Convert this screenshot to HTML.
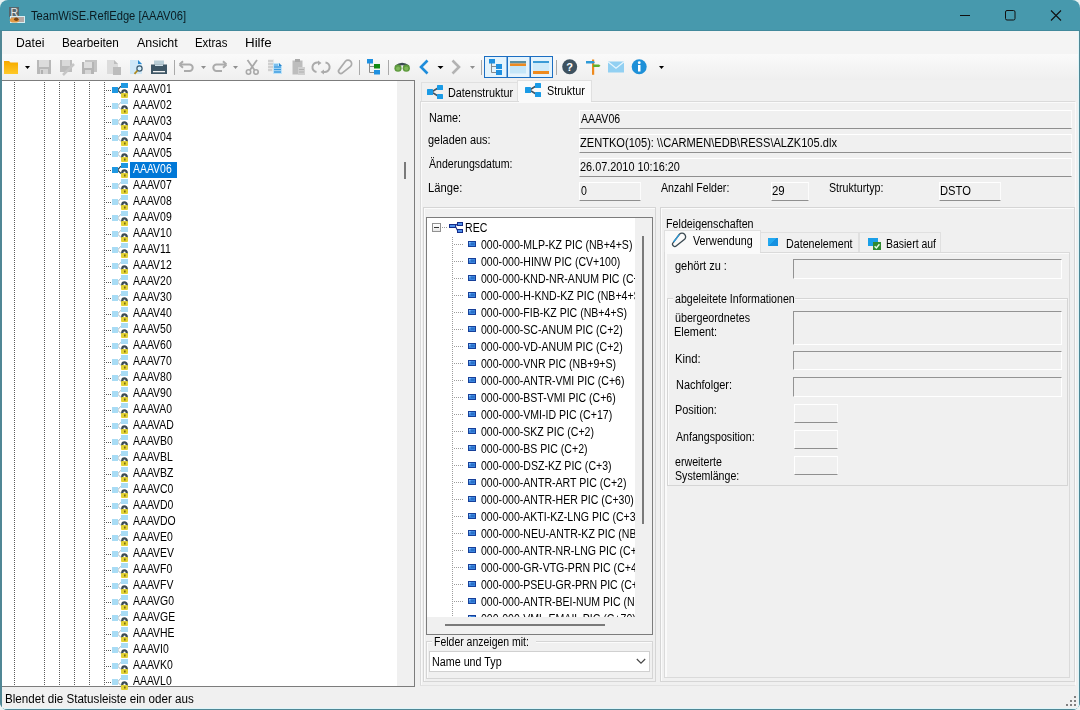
<!DOCTYPE html>
<html><head><meta charset="utf-8"><style>
*{margin:0;padding:0;box-sizing:border-box}
html,body{width:1080px;height:710px;overflow:hidden;background:#e8f2f2;font-family:"Liberation Sans", sans-serif}
.abs{position:absolute}
#win{position:absolute;left:0;top:0;width:1080px;height:710px;background:#f0f0f0;border-radius:8px;overflow:hidden}
.tx{position:absolute;font-size:12px;line-height:13px;color:#000;white-space:nowrap;transform-origin:0 0}
.dotv{position:absolute;width:1px;background:repeating-linear-gradient(to bottom,#5c5c5c 0 1px,transparent 1px 2px)}
.doth{position:absolute;height:1px;background:repeating-linear-gradient(to right,#5c5c5c 0 1px,transparent 1px 2px)}
.fld{position:absolute;background:#f0f0f0;border-top:1px solid #fff;border-left:1px solid #fff;border-bottom:1px solid #8f8f8f;border-right:1px solid #fcfcfc}
.sfld{position:absolute;background:#f0f0f0;border-top:1px solid #939393;border-left:1px solid #939393;border-bottom:1px solid #fff;border-right:1px solid #fff}
.gb{position:absolute;border:1px solid #d5d5d5;box-shadow:inset 1px 1px 0 #fbfbfb}
</style></head><body>
<div id="win">

<div class="abs" style="left:0;top:0;width:1080px;height:710px;background:#4799ad"></div>
<div class="abs" style="left:0;top:31px;width:1080px;height:679px;background:#508795"></div>
<div class="abs" style="left:2px;top:31px;width:1077px;height:678px;background:#dff6fa"></div>
<div class="abs" style="left:2px;top:31px;width:1076px;height:677px;background:#f0f0f0"></div>
<div class="abs" style="left:0;top:30px;width:1080px;height:1px;background:#42899c"></div>
<svg class="abs" style="left:8px;top:6px" width="18" height="18" viewBox="0 0 18 18">
<rect x="1" y="1" width="10" height="10" fill="#56676e"/>
<text x="2.6" y="9.6" font-family="Liberation Sans" font-size="10.5" fill="#e6e6e6">R</text>
<rect x="2.5" y="10.5" width="14" height="6" fill="#b4a9a6" stroke="#d8eef2" stroke-width="1"/>
<ellipse cx="6.5" cy="14" rx="4.8" ry="2.6" fill="#e39a45"/>
<ellipse cx="8.3" cy="13.3" rx="2.2" ry="1.7" fill="#7a4514"/>
</svg>
<div class="tx" style="left:30.55px;top:10px;transform:scaleX(0.931);color:#0a1a20">TeamWiSE.ReflEdge [AAAV06]</div>
<svg class="abs" style="left:950px;top:0" width="130" height="30" viewBox="950 0 130 30">
<rect x="960" y="15" width="10" height="1" fill="#111"/>
<rect x="1005.5" y="10.5" width="9.5" height="9.5" rx="1.5" fill="none" stroke="#111" stroke-width="1"/>
<path d="M1051 10.5 L1061 20.5 M1061 10.5 L1051 20.5" stroke="#111" stroke-width="1.1"/>
</svg>
<div class="abs" style="left:2px;top:31px;width:1076px;height:23px;background:#f4f4f4"></div>
<div class="tx" style="left:15.61px;top:37px;transform:scaleX(1.011)">Datei</div>
<div class="tx" style="left:61.64px;top:37px;transform:scaleX(0.979)">Bearbeiten</div>
<div class="tx" style="left:136.68px;top:37px;transform:scaleX(1.035)">Ansicht</div>
<div class="tx" style="left:195.06px;top:37px;transform:scaleX(0.951)">Extras</div>
<div class="tx" style="left:245.31px;top:37px;transform:scaleX(1.112)">Hilfe</div>
<div class="abs" style="left:2px;top:54px;width:1076px;height:26px;background:linear-gradient(#fafafa,#efefef)"></div>
<svg class="abs" style="left:0;top:54px" width="680" height="26" viewBox="0 54 680 26">
<defs>
<linearGradient id="gfold" x1="0" y1="0" x2="0" y2="1"><stop offset="0" stop-color="#f5a800"/><stop offset="1" stop-color="#ffc928"/></linearGradient>
<linearGradient id="ggray" x1="0" y1="0" x2="0" y2="1"><stop offset="0" stop-color="#c9c9c9"/><stop offset="1" stop-color="#b3b3b3"/></linearGradient>
</defs>
<!-- folder -->
<path d="M4 61 h5 l1.5 1.5 H18 V74 H4 Z" fill="url(#gfold)"/>
<rect x="4" y="64" width="14" height="1" fill="#f9b400"/>
<path d="M25 66 h5 l-2.5 3 z" fill="#000"/>
<!-- save gray -->
<rect x="37" y="60" width="14" height="14" fill="#b8b8b8"/>
<rect x="39" y="60" width="10" height="7" fill="#dcdcdc"/>
<rect x="40" y="69" width="8" height="5" fill="#d5d5d5"/>
<rect x="41" y="70" width="2" height="4" fill="#b0b0b0"/>
<!-- save as gray -->
<rect x="60" y="60" width="12" height="12" fill="#bdbdbd"/>
<rect x="62" y="60" width="8" height="6" fill="#dadada"/>
<path d="M63 75 L74 64" stroke="#c6c6c6" stroke-width="2.5"/>
<!-- save all gray -->
<rect x="85" y="60" width="12" height="12" fill="#c4c4c4"/>
<rect x="82" y="62" width="12" height="12" fill="#b5b5b5"/>
<rect x="84" y="62" width="8" height="6" fill="#dedede"/>
<rect x="85" y="70" width="6" height="4" fill="#d6d6d6"/>
<!-- doc gray -->
<path d="M107 60 h7 l4 4 v10 h-11 z" fill="#dcdcdc"/>
<path d="M114 60 l4 4 h-4 z" fill="#bdbdbd"/>
<rect x="113" y="67" width="8" height="8" fill="#bcbcbc"/>
<!-- print preview -->
<path d="M130 60 h8 l4 4 v10 h-12 z" fill="#cfe8f8"/>
<path d="M138 60 l4 4 h-4 z" fill="#2a8ad0"/>
<circle cx="139.5" cy="68.5" r="2.6" fill="#d9f0fb" stroke="#3a5a70" stroke-width="1.2"/>
<path d="M137.5 70.5 L134.5 73.8" stroke="#b08a20" stroke-width="1.8"/>
<!-- printer -->
<rect x="154" y="60.5" width="10" height="4" fill="#b9cdd6"/>
<path d="M151 64.5 h16 v9.5 h-16 z" fill="#3e5665"/>
<rect x="153" y="71" width="12" height="1.3" fill="#f2f2f2"/>
<rect x="155" y="64.5" width="8" height="1.5" fill="#cfe0e8"/>
<!-- sep -->
<rect x="174" y="60" width="1" height="15" fill="#a9a9a9"/>
<!-- undo -->
<path d="M181 64.5 H189.5 a3.2 3.2 0 0 1 0 6.4 H184" fill="none" stroke="#ababab" stroke-width="2"/>
<path d="M179.5 64.5 L183 61.2 M179.5 64.5 L183 67.8" stroke="#ababab" stroke-width="2" fill="none"/>
<path d="M201 66 h5 l-2.5 3 z" fill="#8f8f8f"/>
<!-- redo -->
<path d="M225 64.5 H216.5 a3.2 3.2 0 0 0 0 6.4 H222" fill="none" stroke="#ababab" stroke-width="2"/>
<path d="M226.5 64.5 L223 61.2 M226.5 64.5 L223 67.8" stroke="#ababab" stroke-width="2" fill="none"/>
<path d="M233 66 h5 l-2.5 3 z" fill="#8f8f8f"/>
<!-- scissors -->
<path d="M247.5 60 L254.5 70 M257 60 L250 70" stroke="#a9a9a9" stroke-width="1.8"/>
<circle cx="248.5" cy="72" r="2.2" fill="none" stroke="#a9a9a9" stroke-width="1.6"/>
<circle cx="256" cy="72" r="2.2" fill="none" stroke="#a9a9a9" stroke-width="1.6"/>
<!-- copy -->
<rect x="268" y="59.5" width="6" height="12" fill="#e6e6e6"/>
<path d="M268 61 h5 M268 64 h5 M268 67 h5 M268 70 h4" stroke="#b9b9b9" stroke-width="1"/>
<path d="M273 63 h6 l3 3 v8 h-9 z" fill="#bfe3f8"/>
<path d="M279 63 l3 3 h-3 z" fill="#2a86cc"/>
<path d="M274 67 h7 M274 69.5 h7 M274 72 h7" stroke="#3b9be0" stroke-width="1.3"/>
<path d="M274 65 h4" stroke="#3b9be0" stroke-width="1"/>
<!-- paste gray -->
<rect x="292.5" y="60.5" width="10" height="14" fill="#bdbdbd"/>
<rect x="295" y="59" width="5" height="3" fill="#a9a9a9"/>
<rect x="298" y="67" width="7" height="8" fill="#cfcfcf"/>
<path d="M299 69.5 h5 M299 72 h5" stroke="#b0b0b0" stroke-width="1"/>
<!-- cycle -->
<path d="M318 62.5 a4.8 4.8 0 0 0 -1.5 9.5 M324 72 a4.8 4.8 0 0 0 1.5 -9.5" fill="none" stroke="#ababab" stroke-width="2"/>
<path d="M318 60.5 L321.5 63 L318 65.5 Z M324 69.5 L320.5 72 L324 74.5 Z" fill="#ababab"/>
<!-- paperclip gray -->
<g transform="translate(337,59)"><path d="M8.42 2.29 A3.6 3.6 0 1 1 13.58 7.31 L5.45 13.8 A2.3 2.3 0 0 1 2.15 10.6 Z" fill="none" stroke="#ababab" stroke-width="1.7"/></g>
<!-- sep -->
<rect x="359" y="60" width="1" height="15" fill="#a9a9a9"/>
<!-- tree green -->
<path d="M369.5 63 V72.5 H374 M369.5 66.5 H374" fill="none" stroke="#8a8a8a" stroke-width="1"/>
<rect x="367" y="59" width="6" height="4.5" fill="#1e90e0"/>
<rect x="374" y="64" width="6" height="4.5" fill="#138a13"/>
<rect x="374" y="70" width="6" height="4.5" fill="#1e90e0"/>
<!-- sep -->
<rect x="388" y="60" width="1" height="15" fill="#a9a9a9"/>
<!-- binoculars -->
<path d="M396 66.5 Q402 61.5 408.5 66.5" fill="none" stroke="#3a4a52" stroke-width="2.6"/>
<circle cx="398" cy="68.2" r="3.6" fill="#5e9a3e"/>
<circle cx="406.3" cy="68.2" r="3.6" fill="#5e9a3e"/>
<circle cx="398" cy="68.5" r="2" fill="#7fb85a"/>
<circle cx="406.3" cy="68.5" r="2" fill="#7fb85a"/>
<!-- back -->
<path d="M427.5 60.5 L421 67 L427.5 73.5" fill="none" stroke="#1f8ddb" stroke-width="2.6"/>
<path d="M437.5 66 h6 l-3 3 z" fill="#000"/>
<!-- forward gray -->
<path d="M452.5 60.5 L459 67 L452.5 73.5" fill="none" stroke="#b3b3b3" stroke-width="2.6"/>
<path d="M470 66 h5 l-2.5 3 z" fill="#8f8f8f"/>
<!-- sep -->
<rect x="481" y="60" width="1" height="15" fill="#a9a9a9"/>
<!-- checked group -->
<rect x="484.5" y="56.5" width="68" height="21" fill="#e4f3fc" stroke="#1b6ec2" stroke-width="1"/>
<rect x="506.5" y="56" width="1.5" height="22" fill="#1b6ec2"/>
<rect x="529.5" y="56" width="1.5" height="22" fill="#1b6ec2"/>
<path d="M491.5 63 V72.5 H496 M491.5 66.5 H496" fill="none" stroke="#8a8a8a" stroke-width="1"/>
<rect x="489" y="59" width="6" height="4.5" fill="#1e90e0"/>
<rect x="496" y="64" width="6" height="5" fill="#1e90e0"/>
<rect x="496" y="70" width="6" height="5" fill="#1e90e0"/>
<rect x="510" y="61" width="16" height="2.5" fill="#5b8fa0"/>
<rect x="510" y="63.5" width="16" height="2.5" fill="#ee8a1e"/>
<rect x="510" y="66" width="16" height="7.5" fill="#c5e6f8"/>
<rect x="533" y="61" width="16" height="2" fill="#3a9ad6"/>
<rect x="533" y="63" width="16" height="8" fill="#cfeaf9"/>
<rect x="533" y="71" width="16" height="3" fill="#ee8a1e"/>
<!-- sep -->
<rect x="556" y="60" width="1" height="15" fill="#a9a9a9"/>
<!-- help -->
<circle cx="569.7" cy="66.7" r="7.5" fill="#3e5260"/>
<text x="569.7" y="71" font-family="Liberation Sans" font-weight="bold" font-size="11" fill="#fff" text-anchor="middle">?</text>
<!-- signpost -->
<rect x="592" y="59.5" width="2.2" height="15.3" fill="#ee8a1e"/>
<path d="M586 61 h7.5 l1.5 1.3 l-1.5 1.3 h-7.5 z" fill="#2e9ad8"/>
<path d="M593 64.5 h6 l1.5 1.3 l-1.5 1.3 h-6 z" fill="#5fb030"/>
<!-- envelope -->
<rect x="608" y="61.5" width="16" height="11" fill="#92d0f2"/>
<path d="M608 61.8 L616 68.3 L624 61.8" fill="none" stroke="#e8f6fd" stroke-width="1.2"/>
<!-- info -->
<circle cx="639.2" cy="66.7" r="7.5" fill="#1e90d8"/>
<rect x="638" y="65" width="2.5" height="6.5" fill="#fff"/>
<circle cx="639.25" cy="62.7" r="1.4" fill="#fff"/>
<path d="M659 66 h5 l-2.5 3 z" fill="#000"/>
</svg>

<div class="abs" style="left:2px;top:80px;width:413px;height:607px;background:#fff;border-top:1px solid #7c7c7c;border-right:1px solid #7c7c7c;border-bottom:1px solid #7c7c7c"></div>
<div class="abs" style="left:397px;top:81px;width:17px;height:605px;background:#f0f0f0"></div>
<div class="abs" style="left:404px;top:162px;width:2px;height:17px;background:#7a7a7a"></div>
<div class="dotv" style="left:14px;top:82px;height:604px"></div>
<div class="dotv" style="left:44px;top:82px;height:604px"></div>
<div class="dotv" style="left:59px;top:82px;height:604px"></div>
<div class="dotv" style="left:74px;top:82px;height:604px"></div>
<div class="dotv" style="left:89px;top:82px;height:604px"></div>
<div class="dotv" style="left:104px;top:82px;height:604px"></div>
<svg width="0" height="0" style="position:absolute"><defs>
<symbol id="ti" viewBox="0 0 17 16">
<path d="M5.5 8 L9 4.2 M5.5 8 L9 11.5" stroke="#a3b3bb" stroke-width="1" fill="none"/>
<rect x="0" y="5" width="6" height="6" fill="#a8dcf5"/>
<rect x="9" y="1" width="7" height="5" fill="#a8dcf5"/>
<path d="M10.3 12 V10.6 a2.2 2.2 0 0 1 4.4 0 V12" stroke="#3a4a52" stroke-width="2.3" fill="none"/>
<rect x="9" y="11" width="7" height="5" rx="1" fill="#e2d236"/>
<rect x="12" y="12.5" width="1.6" height="2" fill="#7a6a10"/>
</symbol>
<symbol id="tid" viewBox="0 0 17 16">
<path d="M5.5 8 L9 4.2 M5.5 8 L9 11.5" stroke="#2f4550" stroke-width="1.2" fill="none"/>
<rect x="0" y="5" width="6" height="6" fill="#1e98e2"/>
<rect x="9" y="1" width="7" height="5" fill="#1e98e2"/>
<path d="M10.3 12 V10.6 a2.2 2.2 0 0 1 4.4 0 V12" stroke="#3a4a52" stroke-width="2.3" fill="none"/>
<rect x="9" y="11" width="7" height="5" rx="1" fill="#e2d236"/>
<rect x="12" y="12.5" width="1.6" height="2" fill="#7a6a10"/>
</symbol>
<symbol id="fi" viewBox="0 0 8 6"><rect x="0" y="0" width="8" height="6" fill="#173f98"/><rect x="1" y="1" width="6" height="4" fill="#3b86e0"/><path d="M1 1 h2 l-2 2 z" fill="#8cc4f8"/><rect x="3" y="2" width="3.5" height="2" fill="#2a70c8"/></symbol>
</defs></svg>
<div class="doth" style="left:104px;top:90px;width:8px"></div>
<svg class="abs" style="left:112px;top:82px" width="17" height="16"><use href="#tid"/></svg>
<div class="tx" style="left:133.28px;top:83px;transform:scaleX(0.870)">AAAV01</div>
<div class="doth" style="left:104px;top:106px;width:8px"></div>
<svg class="abs" style="left:112px;top:98px" width="17" height="16"><use href="#ti"/></svg>
<div class="tx" style="left:133.28px;top:99px;transform:scaleX(0.870)">AAAV02</div>
<div class="doth" style="left:104px;top:122px;width:8px"></div>
<svg class="abs" style="left:112px;top:114px" width="17" height="16"><use href="#ti"/></svg>
<div class="tx" style="left:133.28px;top:115px;transform:scaleX(0.870)">AAAV03</div>
<div class="doth" style="left:104px;top:138px;width:8px"></div>
<svg class="abs" style="left:112px;top:130px" width="17" height="16"><use href="#ti"/></svg>
<div class="tx" style="left:133.28px;top:131px;transform:scaleX(0.870)">AAAV04</div>
<div class="doth" style="left:104px;top:154px;width:8px"></div>
<svg class="abs" style="left:112px;top:146px" width="17" height="16"><use href="#ti"/></svg>
<div class="tx" style="left:133.28px;top:147px;transform:scaleX(0.870)">AAAV05</div>
<div class="doth" style="left:104px;top:170px;width:8px"></div>
<svg class="abs" style="left:112px;top:162px" width="17" height="16"><use href="#tid"/></svg>
<div class="abs" style="left:130px;top:162px;width:47px;height:16px;background:#0078d7"></div>
<div class="tx" style="left:133.28px;top:163px;transform:scaleX(0.870);color:#fff">AAAV06</div>
<div class="doth" style="left:104px;top:186px;width:8px"></div>
<svg class="abs" style="left:112px;top:178px" width="17" height="16"><use href="#ti"/></svg>
<div class="tx" style="left:133.28px;top:179px;transform:scaleX(0.870)">AAAV07</div>
<div class="doth" style="left:104px;top:202px;width:8px"></div>
<svg class="abs" style="left:112px;top:194px" width="17" height="16"><use href="#ti"/></svg>
<div class="tx" style="left:133.28px;top:195px;transform:scaleX(0.870)">AAAV08</div>
<div class="doth" style="left:104px;top:218px;width:8px"></div>
<svg class="abs" style="left:112px;top:210px" width="17" height="16"><use href="#ti"/></svg>
<div class="tx" style="left:133.28px;top:211px;transform:scaleX(0.870)">AAAV09</div>
<div class="doth" style="left:104px;top:234px;width:8px"></div>
<svg class="abs" style="left:112px;top:226px" width="17" height="16"><use href="#ti"/></svg>
<div class="tx" style="left:133.28px;top:227px;transform:scaleX(0.870)">AAAV10</div>
<div class="doth" style="left:104px;top:250px;width:8px"></div>
<svg class="abs" style="left:112px;top:242px" width="17" height="16"><use href="#ti"/></svg>
<div class="tx" style="left:133.28px;top:243px;transform:scaleX(0.870)">AAAV11</div>
<div class="doth" style="left:104px;top:266px;width:8px"></div>
<svg class="abs" style="left:112px;top:258px" width="17" height="16"><use href="#ti"/></svg>
<div class="tx" style="left:133.28px;top:259px;transform:scaleX(0.870)">AAAV12</div>
<div class="doth" style="left:104px;top:282px;width:8px"></div>
<svg class="abs" style="left:112px;top:274px" width="17" height="16"><use href="#ti"/></svg>
<div class="tx" style="left:133.28px;top:275px;transform:scaleX(0.870)">AAAV20</div>
<div class="doth" style="left:104px;top:298px;width:8px"></div>
<svg class="abs" style="left:112px;top:290px" width="17" height="16"><use href="#ti"/></svg>
<div class="tx" style="left:133.28px;top:291px;transform:scaleX(0.870)">AAAV30</div>
<div class="doth" style="left:104px;top:314px;width:8px"></div>
<svg class="abs" style="left:112px;top:306px" width="17" height="16"><use href="#ti"/></svg>
<div class="tx" style="left:133.28px;top:307px;transform:scaleX(0.870)">AAAV40</div>
<div class="doth" style="left:104px;top:330px;width:8px"></div>
<svg class="abs" style="left:112px;top:322px" width="17" height="16"><use href="#ti"/></svg>
<div class="tx" style="left:133.28px;top:323px;transform:scaleX(0.870)">AAAV50</div>
<div class="doth" style="left:104px;top:346px;width:8px"></div>
<svg class="abs" style="left:112px;top:338px" width="17" height="16"><use href="#ti"/></svg>
<div class="tx" style="left:133.28px;top:339px;transform:scaleX(0.870)">AAAV60</div>
<div class="doth" style="left:104px;top:362px;width:8px"></div>
<svg class="abs" style="left:112px;top:354px" width="17" height="16"><use href="#ti"/></svg>
<div class="tx" style="left:133.28px;top:355px;transform:scaleX(0.870)">AAAV70</div>
<div class="doth" style="left:104px;top:378px;width:8px"></div>
<svg class="abs" style="left:112px;top:370px" width="17" height="16"><use href="#ti"/></svg>
<div class="tx" style="left:133.28px;top:371px;transform:scaleX(0.870)">AAAV80</div>
<div class="doth" style="left:104px;top:394px;width:8px"></div>
<svg class="abs" style="left:112px;top:386px" width="17" height="16"><use href="#ti"/></svg>
<div class="tx" style="left:133.28px;top:387px;transform:scaleX(0.870)">AAAV90</div>
<div class="doth" style="left:104px;top:410px;width:8px"></div>
<svg class="abs" style="left:112px;top:402px" width="17" height="16"><use href="#ti"/></svg>
<div class="tx" style="left:133.28px;top:403px;transform:scaleX(0.870)">AAAVA0</div>
<div class="doth" style="left:104px;top:426px;width:8px"></div>
<svg class="abs" style="left:112px;top:418px" width="17" height="16"><use href="#ti"/></svg>
<div class="tx" style="left:133.28px;top:419px;transform:scaleX(0.870)">AAAVAD</div>
<div class="doth" style="left:104px;top:442px;width:8px"></div>
<svg class="abs" style="left:112px;top:434px" width="17" height="16"><use href="#ti"/></svg>
<div class="tx" style="left:133.28px;top:435px;transform:scaleX(0.870)">AAAVB0</div>
<div class="doth" style="left:104px;top:458px;width:8px"></div>
<svg class="abs" style="left:112px;top:450px" width="17" height="16"><use href="#ti"/></svg>
<div class="tx" style="left:133.28px;top:451px;transform:scaleX(0.870)">AAAVBL</div>
<div class="doth" style="left:104px;top:474px;width:8px"></div>
<svg class="abs" style="left:112px;top:466px" width="17" height="16"><use href="#ti"/></svg>
<div class="tx" style="left:133.28px;top:467px;transform:scaleX(0.870)">AAAVBZ</div>
<div class="doth" style="left:104px;top:490px;width:8px"></div>
<svg class="abs" style="left:112px;top:482px" width="17" height="16"><use href="#ti"/></svg>
<div class="tx" style="left:133.28px;top:483px;transform:scaleX(0.870)">AAAVC0</div>
<div class="doth" style="left:104px;top:506px;width:8px"></div>
<svg class="abs" style="left:112px;top:498px" width="17" height="16"><use href="#ti"/></svg>
<div class="tx" style="left:133.28px;top:499px;transform:scaleX(0.870)">AAAVD0</div>
<div class="doth" style="left:104px;top:522px;width:8px"></div>
<svg class="abs" style="left:112px;top:514px" width="17" height="16"><use href="#ti"/></svg>
<div class="tx" style="left:133.28px;top:515px;transform:scaleX(0.870)">AAAVDO</div>
<div class="doth" style="left:104px;top:538px;width:8px"></div>
<svg class="abs" style="left:112px;top:530px" width="17" height="16"><use href="#ti"/></svg>
<div class="tx" style="left:133.28px;top:531px;transform:scaleX(0.870)">AAAVE0</div>
<div class="doth" style="left:104px;top:554px;width:8px"></div>
<svg class="abs" style="left:112px;top:546px" width="17" height="16"><use href="#ti"/></svg>
<div class="tx" style="left:133.28px;top:547px;transform:scaleX(0.870)">AAAVEV</div>
<div class="doth" style="left:104px;top:570px;width:8px"></div>
<svg class="abs" style="left:112px;top:562px" width="17" height="16"><use href="#ti"/></svg>
<div class="tx" style="left:133.28px;top:563px;transform:scaleX(0.870)">AAAVF0</div>
<div class="doth" style="left:104px;top:586px;width:8px"></div>
<svg class="abs" style="left:112px;top:578px" width="17" height="16"><use href="#ti"/></svg>
<div class="tx" style="left:133.28px;top:579px;transform:scaleX(0.870)">AAAVFV</div>
<div class="doth" style="left:104px;top:602px;width:8px"></div>
<svg class="abs" style="left:112px;top:594px" width="17" height="16"><use href="#ti"/></svg>
<div class="tx" style="left:133.28px;top:595px;transform:scaleX(0.870)">AAAVG0</div>
<div class="doth" style="left:104px;top:618px;width:8px"></div>
<svg class="abs" style="left:112px;top:610px" width="17" height="16"><use href="#ti"/></svg>
<div class="tx" style="left:133.28px;top:611px;transform:scaleX(0.870)">AAAVGE</div>
<div class="doth" style="left:104px;top:634px;width:8px"></div>
<svg class="abs" style="left:112px;top:626px" width="17" height="16"><use href="#ti"/></svg>
<div class="tx" style="left:133.28px;top:627px;transform:scaleX(0.870)">AAAVHE</div>
<div class="doth" style="left:104px;top:650px;width:8px"></div>
<svg class="abs" style="left:112px;top:642px" width="17" height="16"><use href="#ti"/></svg>
<div class="tx" style="left:133.28px;top:643px;transform:scaleX(0.870)">AAAVI0</div>
<div class="doth" style="left:104px;top:666px;width:8px"></div>
<svg class="abs" style="left:112px;top:658px" width="17" height="16"><use href="#ti"/></svg>
<div class="tx" style="left:133.28px;top:659px;transform:scaleX(0.870)">AAAVK0</div>
<div class="doth" style="left:104px;top:682px;width:8px"></div>
<svg class="abs" style="left:112px;top:674px" width="17" height="16"><use href="#ti"/></svg>
<div class="tx" style="left:133.28px;top:675px;transform:scaleX(0.870)">AAAVL0</div>
<div class="abs" style="left:421px;top:82px;width:97px;height:20px;background:#f0f0f0;border:1px solid #e0e0e0;border-bottom:none"></div>
<div class="abs" style="left:517px;top:80px;width:75px;height:22px;background:#fafafa;border:1px solid #e0e0e0;border-bottom:none"></div>
<svg width="0" height="0" style="position:absolute"><defs>
<symbol id="share" viewBox="0 0 16 16">
<path d="M4.5 8 L11 4 M4.5 8 L11 12" stroke="#3f5566" stroke-width="1.5"/>
<rect x="0" y="5" width="6" height="6" rx="0.6" fill="#1a9be6"/>
<rect x="10" y="1" width="6" height="5" rx="0.5" fill="#1a9be6"/>
<rect x="10" y="10" width="6" height="5" rx="0.5" fill="#1a9be6"/>
</symbol></defs></svg>
<svg class="abs" style="left:427px;top:84px" width="16" height="16"><use href="#share"/></svg>
<div class="tx" style="left:448.21px;top:87px;transform:scaleX(0.903)">Datenstruktur</div>
<svg class="abs" style="left:525px;top:82px" width="16" height="16"><use href="#share"/></svg>
<div class="tx" style="left:546.71px;top:85px;transform:scaleX(0.899)">Struktur</div>
<div class="abs" style="left:420px;top:101px;width:656px;height:585px;background:#f0f0f0;border:1px solid #dadada;border-right-color:#fbfbfb;border-bottom-color:#e2e2e2;box-shadow:inset 1px 1px 0 #fafafa"></div>
<div class="abs" style="left:519px;top:100px;width:72px;height:3px;background:#fafafa"></div>
<div class="tx" style="left:428.61px;top:112px;transform:scaleX(0.905)">Name:</div>
<div class="tx" style="left:428.14px;top:134px;transform:scaleX(0.910)">geladen aus:</div>
<div class="tx" style="left:428.88px;top:158px;transform:scaleX(0.881)">Änderungsdatum:</div>
<div class="tx" style="left:428.48px;top:182px;transform:scaleX(0.933)">Länge:</div>
<div class="tx" style="left:660.88px;top:182px;transform:scaleX(0.883)">Anzahl Felder:</div>
<div class="tx" style="left:828.62px;top:182px;transform:scaleX(0.886)">Strukturtyp:</div>
<div class="fld" style="left:579px;top:110px;width:493px;height:19px"></div>
<div class="tx" style="left:580.68px;top:113px;transform:scaleX(0.880)">AAAV06</div>
<div class="fld" style="left:579px;top:134px;width:493px;height:19px"></div>
<div class="tx" style="left:580.35px;top:137px;transform:scaleX(0.924)">ZENTKO(105): \\CARMEN\EDB\RESS\ALZK105.dlx</div>
<div class="fld" style="left:579px;top:158px;width:493px;height:19px"></div>
<div class="tx" style="left:580.25px;top:161px;transform:scaleX(0.907)">26.07.2010 10:16:20</div>
<div class="fld" style="left:579px;top:182px;width:62px;height:19px"></div>
<div class="tx" style="left:580.79px;top:185px;transform:scaleX(0.880)">0</div>
<div class="fld" style="left:771px;top:182px;width:38px;height:19px"></div>
<div class="tx" style="left:772.13px;top:185px;transform:scaleX(0.953)">29</div>
<div class="fld" style="left:939px;top:182px;width:62px;height:19px"></div>
<div class="tx" style="left:940.28px;top:185px;transform:scaleX(0.932)">DSTO</div>
<div class="gb" style="left:423px;top:207px;width:233px;height:475px"></div>
<div class="abs" style="left:426px;top:217px;width:227px;height:418px;background:#fff;border:1px solid #7c7c7c"></div>
<div class="abs" style="left:635px;top:218px;width:17px;height:416px;background:#f0f0f0"></div>
<div class="abs" style="left:427px;top:617px;width:208px;height:17px;background:#f0f0f0"></div>
<div class="abs" style="left:642px;top:236px;width:2px;height:288px;background:#7a7a7a"></div>
<div class="abs" style="left:445px;top:624px;width:160px;height:2px;background:#7a7a7a"></div>
<div class="abs" style="left:432px;top:223px;width:9px;height:9px;border:1px solid #919191;background:linear-gradient(#fff,#e8e8e8)"></div>
<div class="abs" style="left:434px;top:227px;width:5px;height:1px;background:#333"></div>
<div class="doth" style="left:442px;top:227px;width:6px;filter:opacity(0.6)"></div>
<svg class="abs" style="left:449px;top:222px" width="15" height="12" viewBox="0 0 15 12">
<path d="M6.5 3.5 L8.5 2 M6.5 4.5 L8.5 8.5" stroke="#142c8a" stroke-width="1.1" fill="none"/>
<rect x="0" y="2" width="7" height="4" fill="#142c8a"/><rect x="1" y="3" width="5" height="2" fill="#4f8fea"/>
<rect x="8" y="0" width="6" height="4" fill="#142c8a"/><rect x="9" y="1" width="4" height="2" fill="#4f8fea"/>
<rect x="8" y="7" width="6" height="4" fill="#142c8a"/><rect x="9" y="8" width="4" height="2" fill="#4f8fea"/>
</svg>
<div class="tx" style="left:464.83px;top:222px;transform:scaleX(0.880)">REC</div>
<div style="position:absolute;left:427px;top:235px;width:208px;height:382px;overflow:hidden">
<div class="dotv" style="left:25px;top:2px;height:380px;filter:opacity(0.6)"></div>
<div class="doth" style="left:27px;top:9px;width:9px;filter:opacity(0.6)"></div>
<svg class="abs" style="left:41px;top:6px" width="8" height="6"><use href="#fi"/></svg>
<div class="tx" style="left:54.49px;top:4px;transform:scaleX(0.880)">000-000-MLP-KZ PIC (NB+4+S)</div>
<div class="doth" style="left:27px;top:26px;width:9px;filter:opacity(0.6)"></div>
<svg class="abs" style="left:41px;top:23px" width="8" height="6"><use href="#fi"/></svg>
<div class="tx" style="left:54.49px;top:21px;transform:scaleX(0.880)">000-000-HINW PIC (CV+100)</div>
<div class="doth" style="left:27px;top:43px;width:9px;filter:opacity(0.6)"></div>
<svg class="abs" style="left:41px;top:40px" width="8" height="6"><use href="#fi"/></svg>
<div class="tx" style="left:54.49px;top:38px;transform:scaleX(0.880)">000-000-KND-NR-ANUM PIC (C+40)</div>
<div class="doth" style="left:27px;top:60px;width:9px;filter:opacity(0.6)"></div>
<svg class="abs" style="left:41px;top:57px" width="8" height="6"><use href="#fi"/></svg>
<div class="tx" style="left:54.49px;top:55px;transform:scaleX(0.880)">000-000-H-KND-KZ PIC (NB+4+S)</div>
<div class="doth" style="left:27px;top:77px;width:9px;filter:opacity(0.6)"></div>
<svg class="abs" style="left:41px;top:74px" width="8" height="6"><use href="#fi"/></svg>
<div class="tx" style="left:54.49px;top:72px;transform:scaleX(0.880)">000-000-FIB-KZ PIC (NB+4+S)</div>
<div class="doth" style="left:27px;top:94px;width:9px;filter:opacity(0.6)"></div>
<svg class="abs" style="left:41px;top:91px" width="8" height="6"><use href="#fi"/></svg>
<div class="tx" style="left:54.49px;top:89px;transform:scaleX(0.880)">000-000-SC-ANUM PIC (C+2)</div>
<div class="doth" style="left:27px;top:111px;width:9px;filter:opacity(0.6)"></div>
<svg class="abs" style="left:41px;top:108px" width="8" height="6"><use href="#fi"/></svg>
<div class="tx" style="left:54.49px;top:106px;transform:scaleX(0.880)">000-000-VD-ANUM PIC (C+2)</div>
<div class="doth" style="left:27px;top:128px;width:9px;filter:opacity(0.6)"></div>
<svg class="abs" style="left:41px;top:125px" width="8" height="6"><use href="#fi"/></svg>
<div class="tx" style="left:54.49px;top:123px;transform:scaleX(0.880)">000-000-VNR PIC (NB+9+S)</div>
<div class="doth" style="left:27px;top:145px;width:9px;filter:opacity(0.6)"></div>
<svg class="abs" style="left:41px;top:142px" width="8" height="6"><use href="#fi"/></svg>
<div class="tx" style="left:54.49px;top:140px;transform:scaleX(0.880)">000-000-ANTR-VMI PIC (C+6)</div>
<div class="doth" style="left:27px;top:162px;width:9px;filter:opacity(0.6)"></div>
<svg class="abs" style="left:41px;top:159px" width="8" height="6"><use href="#fi"/></svg>
<div class="tx" style="left:54.49px;top:157px;transform:scaleX(0.880)">000-000-BST-VMI PIC (C+6)</div>
<div class="doth" style="left:27px;top:179px;width:9px;filter:opacity(0.6)"></div>
<svg class="abs" style="left:41px;top:176px" width="8" height="6"><use href="#fi"/></svg>
<div class="tx" style="left:54.49px;top:174px;transform:scaleX(0.880)">000-000-VMI-ID PIC (C+17)</div>
<div class="doth" style="left:27px;top:196px;width:9px;filter:opacity(0.6)"></div>
<svg class="abs" style="left:41px;top:193px" width="8" height="6"><use href="#fi"/></svg>
<div class="tx" style="left:54.49px;top:191px;transform:scaleX(0.880)">000-000-SKZ PIC (C+2)</div>
<div class="doth" style="left:27px;top:213px;width:9px;filter:opacity(0.6)"></div>
<svg class="abs" style="left:41px;top:210px" width="8" height="6"><use href="#fi"/></svg>
<div class="tx" style="left:54.49px;top:208px;transform:scaleX(0.880)">000-000-BS PIC (C+2)</div>
<div class="doth" style="left:27px;top:230px;width:9px;filter:opacity(0.6)"></div>
<svg class="abs" style="left:41px;top:227px" width="8" height="6"><use href="#fi"/></svg>
<div class="tx" style="left:54.49px;top:225px;transform:scaleX(0.880)">000-000-DSZ-KZ PIC (C+3)</div>
<div class="doth" style="left:27px;top:247px;width:9px;filter:opacity(0.6)"></div>
<svg class="abs" style="left:41px;top:244px" width="8" height="6"><use href="#fi"/></svg>
<div class="tx" style="left:54.49px;top:242px;transform:scaleX(0.880)">000-000-ANTR-ART PIC (C+2)</div>
<div class="doth" style="left:27px;top:264px;width:9px;filter:opacity(0.6)"></div>
<svg class="abs" style="left:41px;top:261px" width="8" height="6"><use href="#fi"/></svg>
<div class="tx" style="left:54.49px;top:259px;transform:scaleX(0.880)">000-000-ANTR-HER PIC (C+30)</div>
<div class="doth" style="left:27px;top:281px;width:9px;filter:opacity(0.6)"></div>
<svg class="abs" style="left:41px;top:278px" width="8" height="6"><use href="#fi"/></svg>
<div class="tx" style="left:54.49px;top:276px;transform:scaleX(0.880)">000-000-AKTI-KZ-LNG PIC (C+3)</div>
<div class="doth" style="left:27px;top:298px;width:9px;filter:opacity(0.6)"></div>
<svg class="abs" style="left:41px;top:295px" width="8" height="6"><use href="#fi"/></svg>
<div class="tx" style="left:54.49px;top:293px;transform:scaleX(0.880)">000-000-NEU-ANTR-KZ PIC (NB+4+S)</div>
<div class="doth" style="left:27px;top:315px;width:9px;filter:opacity(0.6)"></div>
<svg class="abs" style="left:41px;top:312px" width="8" height="6"><use href="#fi"/></svg>
<div class="tx" style="left:54.49px;top:310px;transform:scaleX(0.880)">000-000-ANTR-NR-LNG PIC (C+4)</div>
<div class="doth" style="left:27px;top:332px;width:9px;filter:opacity(0.6)"></div>
<svg class="abs" style="left:41px;top:329px" width="8" height="6"><use href="#fi"/></svg>
<div class="tx" style="left:54.49px;top:327px;transform:scaleX(0.880)">000-000-GR-VTG-PRN PIC (C+40)</div>
<div class="doth" style="left:27px;top:349px;width:9px;filter:opacity(0.6)"></div>
<svg class="abs" style="left:41px;top:346px" width="8" height="6"><use href="#fi"/></svg>
<div class="tx" style="left:54.49px;top:344px;transform:scaleX(0.880)">000-000-PSEU-GR-PRN PIC (C+40)</div>
<div class="doth" style="left:27px;top:366px;width:9px;filter:opacity(0.6)"></div>
<svg class="abs" style="left:41px;top:363px" width="8" height="6"><use href="#fi"/></svg>
<div class="tx" style="left:54.49px;top:361px;transform:scaleX(0.880)">000-000-ANTR-BEI-NUM PIC (NB+4+S)</div>
<div class="doth" style="left:27px;top:383px;width:9px;filter:opacity(0.6)"></div>
<svg class="abs" style="left:41px;top:380px" width="8" height="6"><use href="#fi"/></svg>
<div class="tx" style="left:54.49px;top:378px;transform:scaleX(0.880)">000-000-VML-EMAIL PIC (C+70)</div>
</div>
<div class="gb" style="left:426px;top:641px;width:227px;height:38px"></div>
<div class="abs" style="left:432px;top:636px;width:104px;height:11px;background:#f0f0f0"></div>
<div class="tx" style="left:434.44px;top:636px;transform:scaleX(0.873)">Felder anzeigen mit:</div>
<div class="abs" style="left:429px;top:651px;width:221px;height:21px;background:#fff;border:1px solid #d0d0d0"></div>
<div class="tx" style="left:432.12px;top:656px;transform:scaleX(0.895)">Name und Typ</div>
<svg class="abs" style="left:636px;top:658px" width="10" height="7"><path d="M0.8 1 L5 5.2 L9.2 1" stroke="#444" stroke-width="1.1" fill="none"/></svg>
<div class="gb" style="left:660px;top:207px;width:415px;height:475px"></div>
<div class="tx" style="left:665.52px;top:218px;transform:scaleX(0.893)">Feldeigenschaften</div>
<div class="abs" style="left:760px;top:232px;width:99px;height:20px;background:#f0f0f0;border:1px solid #e0e0e0;border-bottom:none"></div>
<div class="abs" style="left:859px;top:232px;width:82px;height:20px;background:#f0f0f0;border:1px solid #e0e0e0;border-bottom:none"></div>
<div class="abs" style="left:664px;top:230px;width:97px;height:23px;background:#fafafa;border:1px solid #e0e0e0;border-bottom:none"></div>
<div class="abs" style="left:664px;top:252px;width:406px;height:426px;background:#f0f0f0;border:1px solid #dadada;box-shadow:inset 2px 1px 0 #fafafa"></div>
<div class="abs" style="left:665px;top:251px;width:95px;height:2px;background:#fafafa"></div>
<svg class="abs" style="left:671px;top:232px" width="16" height="16" viewBox="0 0 16 16"><path d="M8.42 2.29 A3.6 3.6 0 1 1 13.58 7.31 L5.45 13.8 A2.3 2.3 0 0 1 2.15 10.6 Z" fill="none" stroke="#3b4a52" stroke-width="1.3"/><path d="M2.6 10 L8.42 2.29" stroke="#2f9ad8" stroke-width="1.3"/></svg>
<div class="tx" style="left:693.15px;top:235px;transform:scaleX(0.895)">Verwendung</div>
<div class="abs" style="left:768px;top:238px;width:10px;height:8px;background:linear-gradient(135deg,#22a8f0 0 50%,#1590e0 50%)"></div>
<div class="tx" style="left:785.82px;top:238px;transform:scaleX(0.891)">Datenelement</div>
<svg class="abs" style="left:867px;top:236px" width="15" height="15" viewBox="0 0 15 15"><rect x="1" y="2" width="10" height="8" fill="#1a9fe8"/><rect x="6" y="6" width="8" height="8" fill="#2f8a30"/><path d="M7.6 10.2 L9.4 12 L12.4 8.2" stroke="#e8ffe8" stroke-width="1.4" fill="none"/></svg>
<div class="tx" style="left:885.84px;top:238px;transform:scaleX(0.871)">Basiert auf</div>
<div class="tx" style="left:675.04px;top:260px;transform:scaleX(0.915)">gehört zu :</div>
<div class="sfld" style="left:793px;top:259px;width:269px;height:20px"></div>
<div class="gb" style="left:667px;top:298px;width:401px;height:188px"></div>
<div class="abs" style="left:673px;top:293px;width:122px;height:11px;background:#f0f0f0"></div>
<div class="tx" style="left:675.05px;top:293px;transform:scaleX(0.884)">abgeleitete Informationen</div>
<div class="tx" style="left:674.57px;top:312px;transform:scaleX(0.892)">übergeordnetes</div>
<div class="tx" style="left:674.4px;top:326px;transform:scaleX(0.910)">Element:</div>
<div class="sfld" style="left:793px;top:311px;width:269px;height:34px"></div>
<div class="tx" style="left:674.98px;top:353px;transform:scaleX(0.938)">Kind:</div>
<div class="sfld" style="left:793px;top:351px;width:269px;height:19px"></div>
<div class="tx" style="left:675.5px;top:379px;transform:scaleX(0.913)">Nachfolger:</div>
<div class="sfld" style="left:793px;top:377px;width:269px;height:20px"></div>
<div class="tx" style="left:675.0px;top:404px;transform:scaleX(0.910)">Position:</div>
<div class="fld" style="left:794px;top:404px;width:44px;height:19px"></div>
<div class="tx" style="left:675.98px;top:431px;transform:scaleX(0.886)">Anfangsposition:</div>
<div class="fld" style="left:794px;top:430px;width:44px;height:19px"></div>
<div class="tx" style="left:675.25px;top:456px;transform:scaleX(0.889)">erweiterte</div>
<div class="tx" style="left:675.22px;top:470px;transform:scaleX(0.884)">Systemlänge:</div>
<div class="fld" style="left:794px;top:456px;width:44px;height:19px"></div>
<div class="tx" style="left:4.85px;top:693px;transform:scaleX(0.969)">Blendet die Statusleiste ein oder aus</div>
<div class="abs" style="left:1074px;top:696px;width:2px;height:2px;background:#808080"></div>
<div class="abs" style="left:1070px;top:700px;width:2px;height:2px;background:#808080"></div>
<div class="abs" style="left:1074px;top:700px;width:2px;height:2px;background:#808080"></div>
<div class="abs" style="left:1066px;top:704px;width:2px;height:2px;background:#808080"></div>
<div class="abs" style="left:1070px;top:704px;width:2px;height:2px;background:#808080"></div>
<div class="abs" style="left:1074px;top:704px;width:2px;height:2px;background:#808080"></div>
</div></body></html>
